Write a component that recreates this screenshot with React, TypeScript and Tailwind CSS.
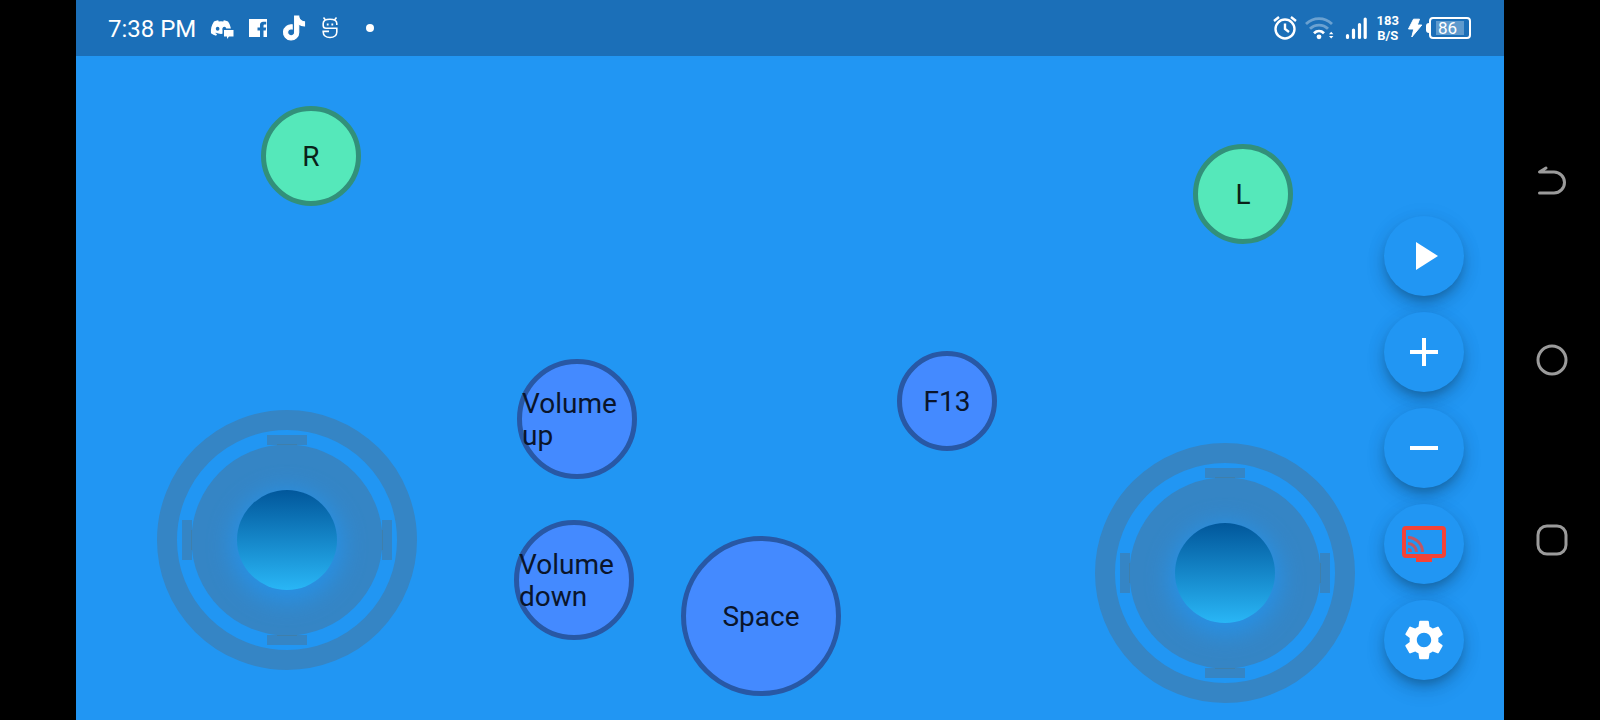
import type { ReactNode } from "react";
import { FaDiscord, FaTiktok } from "react-icons/fa";
import { MdSettings } from "react-icons/md";

function DiscordIcon() {
  return (
    <span className="relative flex h-6 w-6 items-center">
      <FaDiscord className="size-[22px]" aria-hidden="true" />
      <svg viewBox="0 0 24 24" className="absolute inset-0 h-6 w-6" aria-hidden="true">
        <path d="M12.500 12.500H24V24H12.500z" fill="#1b6fb8" />
        <path d="M14 14h9.500v6.500H19L17 23v-2.500h-3z" fill="currentColor" />
      </svg>
    </span>
  );
}

function FacebookIcon() {
  return (
    <svg viewBox="0 0 20 20" className="h-5 w-5" aria-hidden="true">
      <path
        fill="currentColor"
        d="M1 1h18v18h-3.500v-6.500h2.200l.5-3h-2.700V8c0-.9.400-1.400 1.400-1.400h1.300V3.800h-2.200C12.800 3.800 12 5.200 12 7.300v2.200H9.500v3H12V19H1z"
      />
    </svg>
  );
}

function GhostIcon() {
  return (
    <svg viewBox="0 0 20 24" className="h-6 w-5" fill="none" stroke="currentColor" strokeWidth="1.600" aria-hidden="true">
      <path d="M3.500 1.500L5.500 4M16.500 1.500L14.500 4" />
      <path d="M16.800 9V7.500C16.800 4.800 14.500 3.300 10 3.300S3.200 4.800 3.200 7.500v2C3.200 11.500 4.500 12.300 6 12.300h10.800v3.700c0 3.200-2.600 5.500-6.800 5.500S3.200 19.200 3.200 16v-.6H9" />
      <path d="M6.800 8.500h1.800M11.400 8.500h1.800" strokeWidth="2" />
    </svg>
  );
}

function AlarmIcon() {
  return (
    <svg viewBox="0 0 24 24" className="h-6 w-6" fill="none" stroke="currentColor" strokeWidth="2.400" aria-hidden="true">
      <circle cx="12" cy="13" r="9.500" />
      <path d="M1 5l5-4M23 5l-5-4M12 7.500V13l4 3" />
    </svg>
  );
}

function WifiIcon() {
  return (
    <svg viewBox="0 0 30 24" className="h-6 w-[30px]" fill="none" stroke="currentColor" strokeWidth="2.800" aria-hidden="true">
      <path d="M1 8c7.500-7.300 18.500-7.300 26 0M5 12.800c5-5 13-5 18 0" opacity="0.350" />
      <path d="M9 17.200c3-2.800 7-2.800 10 0" />
      <circle cx="14" cy="20.800" r="2.400" fill="currentColor" stroke="none" />
      <path d="M24 18.300l2.200-2.600 2.200 2.600zM24 20l2.200 2.600L28.400 20z" fill="currentColor" stroke="none" />
    </svg>
  );
}

function SignalIcon() {
  return (
    <svg viewBox="0 0 22 24" className="h-6 w-[22px]" stroke="currentColor" strokeWidth="3.200" strokeLinecap="round" aria-hidden="true">
      <path d="M2.500 19.500v2M8.500 14v7.500M14.500 8.500v13M20.200 3v18.500" />
    </svg>
  );
}

function StatusBar() {
  return (
    <header className="flex h-14 shrink-0 items-center justify-between bg-[#1b6fb8] pr-[33px] pl-8 text-white">
      <div className="flex items-center">
        <span className="mr-[14px] pt-0.5 text-2xl leading-8">7:38 PM</span>
        <div className="flex items-center gap-[14px]">
          <DiscordIcon />
          <FacebookIcon />
          <FaTiktok className="h-6 w-6 overflow-visible stroke-current stroke-[24]" aria-hidden="true" />
          <GhostIcon />
        </div>
        <span className="ml-[26px] h-2 w-2 rounded-full bg-white" />
      </div>
      <div className="flex items-center">
        <AlarmIcon />
        <span className="ml-2">
          <WifiIcon />
        </span>
        <span className="ml-[10px]">
          <SignalIcon />
        </span>
        <div className="ml-[10px] text-center text-[13px] leading-[15px] font-bold">
          <div>183</div>
          <div>B/S</div>
        </div>
        <svg viewBox="0 0 16 20" className="ml-2 h-5 w-4" fill="currentColor" stroke="currentColor" strokeLinejoin="round" aria-hidden="true">
          <path d="M6.500 1.200h6l-2.200 5.800h4.500L4.800 19l2-8H1.500z" />
        </svg>
        <div className="ml-[3px] flex items-center">
          <span className="h-2.5 w-[3px] rounded-l-sm bg-white" />
          <span className="flex h-[22px] w-[42px] items-center justify-center rounded border-2 border-white">
            <span className="h-[14px] w-7 bg-white/30 pl-0.5 text-[17px] leading-[15px]">86</span>
          </span>
        </div>
      </div>
    </header>
  );
}

function PadKey({ place, children }: { place: string; children: ReactNode }) {
  return (
    <button
      type="button"
      className={`absolute flex items-center justify-center rounded-full border-5 pt-0.5 text-left text-[28px] leading-8 ${place}`}
    >
      {children}
    </button>
  );
}

const GREEN = "size-[100px] border-[#32907a] bg-[#55e8ba] text-[#0a2219]";
const BLUE = "border-[#2858a5] bg-[#448aff] text-[#0a152b]";

function Joystick({ place, id }: { place: string; id: string }) {
  return (
    <svg viewBox="0 0 260 260" className={`absolute size-[260px] ${place}`} role="img" aria-label={`${id} joystick`}>
      <defs>
        <linearGradient id={`${id}-knob`} x1="0" y1="0" x2="0" y2="1">
          <stop offset="0" stopColor="#01579b" />
          <stop offset="1" stopColor="#29b6f6" />
        </linearGradient>
        <filter id={`${id}-glow`} x="-50%" y="-50%" width="200%" height="200%" colorInterpolationFilters="sRGB">
          <feGaussianBlur stdDeviation="12" />
        </filter>
      </defs>
      <circle cx="130" cy="130" r="120" fill="none" stroke="#3585c5" strokeWidth="20" />
      <circle cx="130" cy="130" r="95.500" fill="#3585c5" />
      <path d="M110 25h40v10h-40zM110 225h40v10h-40zM25 110h10v40H25zM225 110h10v40h-10z" fill="#3585c5" />
      <path d="M120 34.500h20M120 225.500h20M34.500 120v20M225.500 120v20" stroke="#437c9f" strokeWidth="0.700" />
      <circle cx="130" cy="136" r="56" fill="#2196f3" opacity="0.700" filter={`url(#${id}-glow)`} />
      <circle cx="130" cy="130" r="50" fill={`url(#${id}-knob)`} />
    </svg>
  );
}

function ActionButton({ label, children }: { label: string; children: ReactNode }) {
  return (
    <button
      type="button"
      aria-label={label}
      className="flex size-20 items-center justify-center rounded-full bg-[#2196f3] text-white shadow-[0_6px_10px_-2px_rgba(0,0,0,0.2),0_10px_20px_rgba(0,0,0,0.14),0_2px_24px_rgba(0,0,0,0.05)]"
    >
      {children}
    </button>
  );
}

function ActionColumn() {
  return (
    <div className="absolute right-10 bottom-10 flex flex-col gap-4">
      <ActionButton label="Play">
        <svg viewBox="0 0 48 48" className="size-12" fill="currentColor">
          <path d="M16 10v28l22-14z" />
        </svg>
      </ActionButton>
      <ActionButton label="Increase size">
        <svg viewBox="0 0 48 48" className="size-12" fill="currentColor">
          <path d="M38 26H26v12h-4V26H10v-4h12V10h4v12h12z" />
        </svg>
      </ActionButton>
      <ActionButton label="Decrease size">
        <svg viewBox="0 0 48 48" className="size-12" fill="currentColor">
          <path d="M10 22h28v4H10z" />
        </svg>
      </ActionButton>
      <ActionButton label="Connection">
        <svg viewBox="0 0 48 48" className="size-12 text-[#f44336]" fill="none" stroke="currentColor">
          <rect x="4" y="8" width="40" height="28" rx="2" strokeWidth="4" />
          <path d="M16 36h16v6H16z" fill="currentColor" stroke="none" />
          <g opacity="0.750">
            <path d="M8 28v4h4a4 4 0 0 0-4-4z" fill="currentColor" stroke="none" />
            <path d="M8 23.500a8.500 8.500 0 0 1 8.500 8.500M8 17.500A14.500 14.500 0 0 1 22.500 32" strokeWidth="3" />
          </g>
        </svg>
      </ActionButton>
      <ActionButton label="Settings">
        <MdSettings className="size-12" />
      </ActionButton>
    </div>
  );
}

function SystemNav() {
  return (
    <nav className="flex w-24 shrink-0 flex-col items-center justify-center gap-[148px] bg-black text-[#9b9b9b]">
      <button type="button" aria-label="Back">
        <svg viewBox="0 0 32 32" className="size-8" fill="none" stroke="currentColor" strokeWidth="3" strokeLinecap="round" strokeLinejoin="round">
          <path d="M10 4L3.500 8H18a10.500 10.500 0 0 1 0 21H3.500" />
        </svg>
      </button>
      <button type="button" aria-label="Home">
        <svg viewBox="0 0 32 32" className="size-8" fill="none" stroke="currentColor" strokeWidth="3">
          <circle cx="16" cy="16" r="14" />
        </svg>
      </button>
      <button type="button" aria-label="Recent apps">
        <svg viewBox="0 0 32 32" className="size-8" fill="none" stroke="currentColor" strokeWidth="3">
          <rect x="2" y="2" width="28" height="28" rx="9" />
        </svg>
      </button>
    </nav>
  );
}

export default function App() {
  return (
    <div className="flex min-h-screen bg-black pl-[76px] font-[Roboto,sans-serif]">
      <div className="flex min-w-0 flex-1 flex-col bg-[#2196f3]">
        <StatusBar />
        <main className="relative flex-1 overflow-hidden">
          <Joystick id="left" place="left-[81px] top-[354px]" />
          <Joystick id="right" place="right-[149px] top-[387px]" />
          <PadKey place={`left-[185px] top-[50px] ${GREEN}`}>R</PadKey>
          <PadKey place={`right-[211px] top-[88px] ${GREEN}`}>L</PadKey>
          <PadKey place={`left-[441px] top-[303px] size-[120px] ${BLUE}`}>Volume up</PadKey>
          <PadKey place={`left-[438px] top-[464px] size-[120px] ${BLUE}`}>Volume down</PadKey>
          <PadKey place={`left-[605px] top-[480px] size-[160px] ${BLUE}`}>Space</PadKey>
          <PadKey place={`left-[821px] top-[295px] size-[100px] ${BLUE}`}>F13</PadKey>
          <ActionColumn />
        </main>
      </div>
      <SystemNav />
    </div>
  );
}
